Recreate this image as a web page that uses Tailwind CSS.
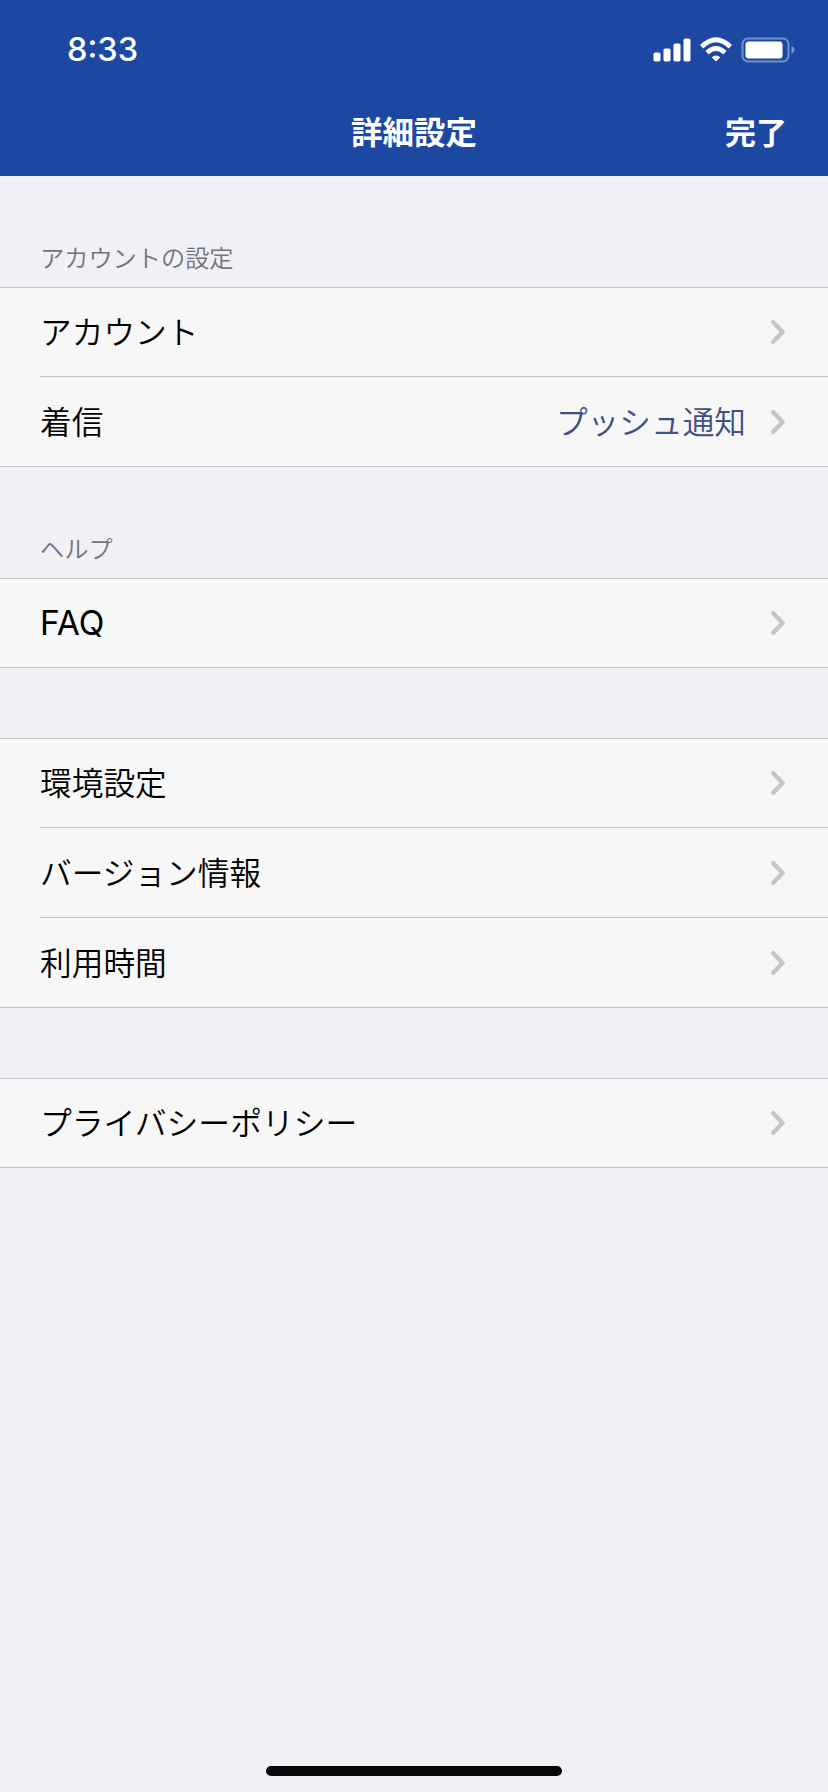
<!DOCTYPE html>
<html lang="ja">
<head>
<meta charset="utf-8">
<title>詳細設定</title>
<script src="https://cdn.jsdelivr.net/npm/@tailwindcss/browser@4"></script>
</head>
<body class="bg-[#f0f0f6]">
<svg class="hidden"><symbol id="chev" viewBox="0 0 16 26"><path d="M3.2 3.2L12.6 13L3.2 22.8" fill="none" stroke="#c5c5c8" stroke-width="4.4" stroke-linecap="round" stroke-linejoin="round"/></symbol></svg>
<div class="flex h-[1792px] w-[828px] flex-col bg-[#f0f0f6] font-['Inter','Noto_Sans_CJK_JP',sans-serif] text-[31.7px] font-[350] leading-none text-black">
  <header class="flex h-[176px] flex-col bg-[#1d48a1] text-white">
    <div class="flex h-[88px] items-center justify-between pt-[12px] pr-[33px] pl-[67px]">
      <span class="pt-px text-[32.5px] font-medium">8:33</span>
      <svg class="h-[28px] w-[144px]" viewBox="650.5 35.5 144 28">
        <g fill="#fff">
          <rect x="653" y="52" width="7" height="9" rx="1.8"/><rect x="663" y="48" width="7" height="13" rx="1.8"/><rect x="673" y="43" width="7" height="18" rx="1.8"/><rect x="683" y="38" width="7" height="23" rx="1.8"/>
          <path d="M715.5 61L711.2 56.8Q715.5 53 719.8 56.8Z"/>
          <rect x="745" y="41" width="37" height="17" rx="3"/>
        </g>
        <g fill="none" stroke="#fff" stroke-width="4.8"><path d="M701.2 46.2Q715.5 32.4 729.8 46.2"/><path d="M706.6 52.2Q715.5 43.9 724.4 52.2"/></g>
        <rect x="742" y="38" width="46" height="23" rx="5.5" fill="none" stroke="#7391cb" stroke-width="2"/>
        <path d="M791 45.5Q794 46.7 794 49.5T791 53.8Z" fill="#7391cb"/>
      </svg>
    </div>
    <div class="grid h-[88px] grid-cols-3 items-center pr-[41px] pl-[41px] pt-[2px] font-bold">
      <span></span><h1 class="text-center text-[31.5px]">詳細設定</h1><span class="pb-[2px] text-right text-[31px]">完了</span>
    </div>
  </header>
  <main class="flex flex-col">
    <h2 class="flex h-[111px] items-end pb-[16px] pl-[40px] text-[24.2px] text-[#737378]">アカウントの設定</h2>
    <section class="border-y border-[#c5c5c9] bg-[#f7f7f7] pl-[40px]">
      <div class="flex h-[89px] items-center justify-between border-b border-[#c5c5c9] pr-[42px]"><span class="pt-[2px]">アカウント</span><svg class="h-[26px] w-[16px]"><use href="#chev"/></svg></div>
      <div class="flex h-[89px] items-center justify-between pt-px pr-[42px]"><span class="pt-[2px]">着信</span><span class="flex items-center gap-[24px] text-[#3e5084]"><span class="pt-[2px]">プッシュ通知</span><svg class="h-[26px] w-[16px]"><use href="#chev"/></svg></span></div>
    </section>
    <h2 class="flex h-[111px] items-end pb-[16px] pl-[40px] text-[24.2px] text-[#737378]">ヘルプ</h2>
    <section class="border-y border-[#c5c5c9] bg-[#f7f7f7] pl-[40px]">
      <div class="flex h-[88px] items-center justify-between pr-[42px]"><span class="pt-[2px] text-[33.5px] font-normal">FAQ</span><svg class="h-[26px] w-[16px]"><use href="#chev"/></svg></div>
    </section>
    <section class="mt-[70px] border-y border-[#c5c5c9] bg-[#f7f7f7] pl-[40px]">
      <div class="flex h-[89px] items-center justify-between border-b border-[#c5c5c9] pr-[42px]"><span class="pt-[2px]">環境設定</span><svg class="h-[26px] w-[16px]"><use href="#chev"/></svg></div>
      <div class="flex h-[90px] items-center justify-between border-b border-[#c5c5c9] pr-[42px]"><span class="pt-[2px]">バージョン情報</span><svg class="h-[26px] w-[16px]"><use href="#chev"/></svg></div>
      <div class="flex h-[89px] items-center justify-between pr-[42px]"><span class="pt-[2px]">利用時間</span><svg class="h-[26px] w-[16px]"><use href="#chev"/></svg></div>
    </section>
    <section class="mt-[70px] border-y border-[#c5c5c9] bg-[#f7f7f7] pl-[40px]">
      <div class="flex h-[88px] items-center justify-between pr-[42px]"><span class="pt-[2px] text-[31.8px]">プライバシーポリシー</span><svg class="h-[26px] w-[16px]"><use href="#chev"/></svg></div>
    </section>
  </main>
  <div class="mx-auto mt-auto mb-[16px] h-[10px] w-[296px] rounded-full bg-[#080808]"></div>
</div>
</body>
</html>
